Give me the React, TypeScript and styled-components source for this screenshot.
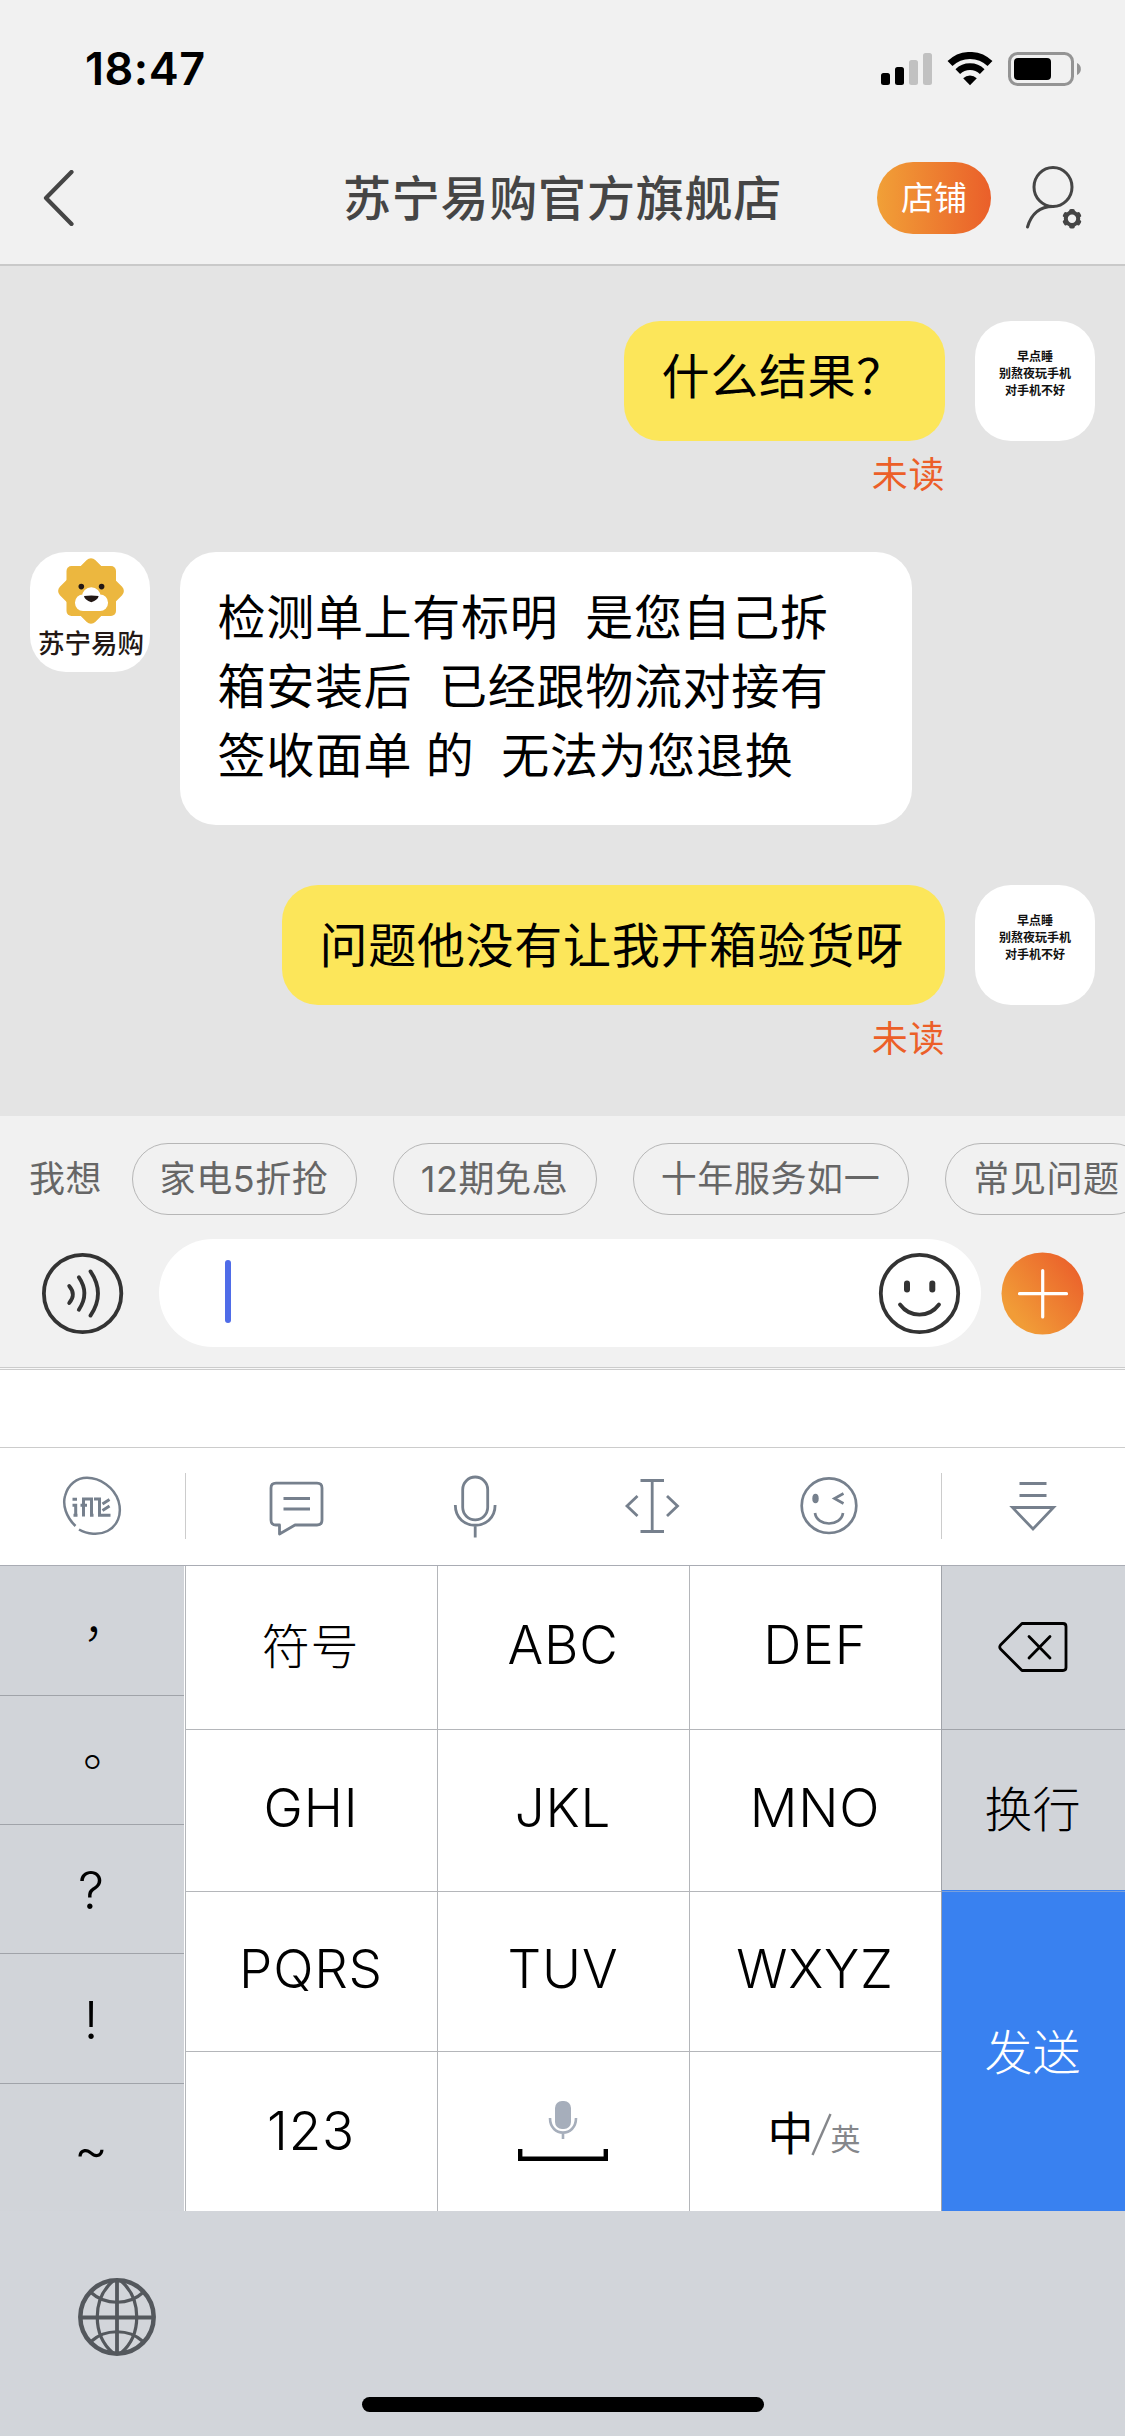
import React from "react";
import styled, { createGlobalStyle, css } from "styled-components";

const cjk = `"Noto Sans CJK SC", "Noto Sans", sans-serif`;
const mixed = `Inter, "Noto Sans CJK SC", sans-serif`;

const GlobalStyle = createGlobalStyle`
  *, *::before, *::after { box-sizing: border-box; }
  body { margin: 0; background: #f1f1f1; }
  svg { display: block; flex: none; }
`;

const Screen = styled.div`
  width: 1125px;
  height: 2436px;
  display: flex;
  flex-direction: column;
  overflow: hidden;
  background: #f1f1f1;
  font-family: ${cjk};
  color: #000;
`;

/* ---------- status bar ---------- */
const StatusBar = styled.div`
  height: 132px;
  flex: none;
  display: flex;
  justify-content: space-between;
  padding: 42px 44px 0 85px;
`;
const Clock = styled.div`
  font: 600 45px/54px Inter, sans-serif;
  letter-spacing: 0.5px;
`;
const StatusIcons = styled.div`
  display: flex;
  gap: 15px;
  padding-top: 10px;
`;

/* ---------- header ---------- */
const Header = styled.header`
  height: 134px;
  flex: none;
  display: grid;
  grid-template-columns: 1fr auto 1fr;
  align-items: center;
  padding: 0 40px;
  border-bottom: 2px solid #c9c9c9;
`;
const Title = styled.h1`
  margin: 0;
  font: 500 48px/60px ${cjk};
  letter-spacing: 0.8px;
  color: #454545;
  padding-bottom: 6px;
`;
const HeaderActions = styled.div`
  display: flex;
  justify-content: flex-end;
  align-items: center;
  gap: 33px;
`;
const ShopButton = styled.div`
  width: 114px;
  height: 72px;
  border-radius: 36px;
  display: flex;
  align-items: center;
  justify-content: center;
  padding-bottom: 4px;
  background: linear-gradient(90deg, #f1a037, #ea5f2a);
  color: #fff;
  font-size: 33px;
  line-height: 40px;
`;

/* ---------- chat ---------- */
const Chat = styled.main`
  height: 850px;
  flex: none;
  background: #e4e4e4;
  padding: 55px 30px 0;
  display: flex;
  flex-direction: column;
`;
const Message = styled.div<{ $mine?: boolean; $gap: number }>`
  display: flex;
  flex-direction: ${(p) => (p.$mine ? "row-reverse" : "row")};
  align-items: flex-start;
  gap: 30px;
  margin-bottom: ${(p) => p.$gap}px;
`;
const Avatar = styled.div`
  width: 120px;
  height: 120px;
  flex: none;
  border-radius: 36px;
  background: #fff;
  overflow: hidden;
  display: flex;
  flex-direction: column;
  align-items: center;
`;
const AvatarNote = styled.div`
  padding-top: 26px;
  font-weight: 700;
  font-size: 12px;
  line-height: 17px;
  text-align: center;
  color: #111;
`;
const BrandName = styled.div`
  font: 500 26.5px/28px ${cjk};
  color: #231815;
  padding-left: 2px;
  white-space: nowrap;
`;
const BubbleColumn = styled.div`
  display: flex;
  flex-direction: column;
  align-items: flex-end;
`;
const Bubble = styled.div<{ $mine?: boolean; $width: number; $top: number }>`
  width: ${(p) => p.$width}px;
  padding: ${(p) => p.$top}px 0 0 37.5px;
  height: ${(p) => (p.$mine ? 120 : 273)}px;
  border-radius: 36px;
  background: ${(p) => (p.$mine ? "#fce65a" : "#fff")};
  font: 400 48px/69px ${mixed};
  letter-spacing: 0.7px;
  word-spacing: -0.8px;
  white-space: pre;
`;
const Unread = styled.div`
  margin-top: 9px;
  font-size: 36px;
  line-height: 44px;
  letter-spacing: 0.6px;
  color: #ec5f28;
`;

/* ---------- composer ---------- */
const Composer = styled.section`
  height: 254px;
  flex: none;
  border-bottom: 1px solid #ccc;
  position: relative;
  &::after {
    content: "";
    position: absolute;
    left: 0;
    right: 0;
    bottom: 0;
    height: 2px;
    border-top: 1px solid #ccc;
    background: #f8f8f8;
  }
`;
const Suggestions = styled.div`
  display: flex;
  align-items: center;
  gap: 36px;
  padding: 27px 0 0 29px;
  color: #666;
  font: 400 36px/44px ${mixed};
  letter-spacing: 0.6px;
  white-space: nowrap;
  overflow: hidden;
`;
const SuggestLabel = styled.span`
  width: 67px;
`;
const Chip = styled.span<{ $width: number }>`
  width: ${(p) => p.$width}px;
  height: 72px;
  flex: none;
  display: flex;
  justify-content: center;
  align-items: center;
  padding: 0 1px 0 0;
  border: 1.5px solid #b6b6b6;
  border-radius: 36px;
`;
const InputRow = styled.div`
  display: flex;
  align-items: center;
  padding: 24px 0 0 41px;
`;
const InputField = styled.div`
  width: 822px;
  height: 108px;
  margin: 0 20px 0 35px;
  border-radius: 54px;
  background: #fff;
  display: flex;
  align-items: center;
  justify-content: space-between;
  padding: 0 20px 0 66px;
`;
const Caret = styled.div`
  width: 6px;
  height: 63px;
  margin-bottom: 3px;
  border-radius: 3px;
  background: #4f6ce8;
`;

/* ---------- keyboard ---------- */
const Candidates = styled.div`
  height: 78px;
  flex: none;
  background: #fff;
  border-bottom: 1px solid #ccc;
`;
const Toolbar = styled.div`
  height: 118px;
  flex: none;
  display: grid;
  grid-template-columns: 186px 1fr 184px;
  align-items: center;
  background: #fff;
  border-bottom: 1px solid #a9acb4;
  padding-bottom: 2px;
`;
const ToolSide = styled.div<{ $side: "left" | "right" }>`
  height: 66px;
  display: flex;
  align-items: center;
  justify-content: center;
  padding-right: 2px;
  ${(p) => (p.$side === "left" ? "border-right" : "border-left")}: 1px solid #ccc;
`;
const ToolMain = styled.div`
  display: flex;
  align-items: center;
  justify-content: space-between;
  padding: 0 82px 0 82px;
`;
const Keys = styled.div`
  height: 645px;
  flex: none;
  display: grid;
  grid-template-columns: 184px 758px 183px;
`;
const SideColumn = styled.div`
  display: grid;
  grid-template-rows: 130px 129px 129px 130px 127px;
  background: #d1d4d9;
`;
const PunctKey = styled.div<{ $full?: boolean }>`
  display: flex;
  align-items: center;
  justify-content: center;
  padding: ${(p) => (p.$full ? "0 0 22px 30px" : "4px 2px 0 0")};
  border-bottom: 1px solid #a0a3a9;
  font: 300 ${(p) => (p.$full ? 48 : 52)}px/60px ${mixed};
  &:last-child { border-bottom: 0; }
`;
const KeyGrid = styled.div`
  display: grid;
  grid-template-columns: 252px 252px 252px;
  grid-template-rows: 164px 162px 160px 159px;
  background: #fff;
  border-right: 1px solid #a0a3a9;
  padding-left: 1px;
`;
const Key = styled.div<{ $cjk?: boolean }>`
  display: flex;
  align-items: center;
  justify-content: center;
  padding: 0 1px 5px 0;
  border-left: 1px solid #b4b6ba;
  border-bottom: 1px solid #b4b6ba;
  letter-spacing: 0.8px;
  ${(p) =>
    p.$cjk
      ? css`font: 300 48px/60px ${cjk}; padding: 0 2px 9px 0;`
      : css`font: 300 53px/60px Inter, sans-serif;`}
  &:nth-child(n + 10) { border-bottom: 0; padding-bottom: 1px; }
`;
const SpaceKey = styled(Key)`
  flex-direction: column;
  gap: 10px;
  padding-right: 2px;
`;
const LangKey = styled(Key)`
  align-items: baseline;
  letter-spacing: 0;
  padding: 48px 3px 0 0;
  font: 400 46px/60px ${cjk};
`;
const LangAlt = styled.span`
  font-size: 30px;
  color: #85878b;
`;
const SlashIcon = styled.svg`
  align-self: flex-start;
  margin: 13px -1px 0 -3px;
`;
const ActionColumn = styled.div`
  display: grid;
  grid-template-rows: 164px 160px 1fr;
  background: #d1d4d9;
`;
const ActionKey = styled.div<{ $send?: boolean }>`
  display: flex;
  align-items: center;
  justify-content: center;
  font: 300 48px/60px ${cjk};
  padding: 0 2px 8px 0;
  border-bottom: 1px solid #a0a3a9;
  ${(p) =>
    p.$send &&
    css`
      background: linear-gradient(#3981f0 1px, #79a0dc 1px, #79a0dc 2px, #3981f0 2px);
      color: #fff;
      border: 0;
      padding-bottom: 4px;
    `}
  &:first-child { padding-bottom: 1px; }
  &:nth-child(2) { border: 0; }
`;
const Dock = styled.footer`
  flex: 1;
  background: #d2d5da;
  display: flex;
  flex-direction: column;
  align-items: center;
  justify-content: space-between;
  padding: 66px 0 24px;
`;
const DockRow = styled.div`
  width: 100%;
  padding-left: 77px;
`;
const HomeIndicator = styled.div`
  width: 402px;
  height: 15px;
  border-radius: 8px;
  background: #000;
`;

/* ---------- icons ---------- */
const tint = "#76808d";

const Signal = () => (
  <svg width="51" height="34" viewBox="0 0 51 34">
    <rect x="0" y="21" width="9" height="12" rx="2.5" />
    <rect x="14" y="15" width="9" height="18" rx="2.5" />
    <rect x="28" y="8" width="9" height="25" rx="2.5" fill="#c1c1c1" />
    <rect x="42" y="1" width="9" height="32" rx="2.5" fill="#c1c1c1" />
  </svg>
);
const Wifi = () => (
  <svg width="46" height="34" viewBox="0 0 46 34">
    <path d="M3 11.6 A28.6 28.6 0 0 1 43 11.6" fill="none" stroke="#000" strokeWidth="7" />
    <path d="M10.8 19.7 A17.3 17.3 0 0 1 35.2 19.7" fill="none" stroke="#000" strokeWidth="6.6" />
    <path d="M23 33.2 L16.2 26.2 A9.8 9.8 0 0 1 29.8 26.2 Z" />
  </svg>
);
const Battery = () => (
  <svg width="73" height="34" viewBox="0 0 73 34">
    <rect x="1.5" y="1.5" width="63" height="31" rx="8" fill="none" stroke="#949494" strokeWidth="3" />
    <rect x="6" y="6" width="37" height="22" rx="4" />
    <path d="M69 11 A6.6 6.6 0 0 1 69 23 Z" fill="#949494" />
  </svg>
);
const Back = () => (
  <svg width="36" height="56" viewBox="0 0 36 56">
    <path d="M31.5 2 L6 28 L31.5 54" fill="none" stroke="#454545" strokeWidth="4.2" strokeLinecap="round" strokeLinejoin="round" />
  </svg>
);
const gearTeeth = [0, 60, 120, 180, 240, 300];
const UserSettings = () => (
  <svg width="61" height="66" viewBox="0 0 61 66">
    <g fill="none" stroke="#454545" strokeWidth="3" strokeLinecap="round">
      <ellipse cx="29" cy="22" rx="19" ry="19.5" />
      <path d="M3.5 62 C7 50 15 41.5 29 41.5" />
    </g>
    <circle cx="48" cy="53.7" r="6.2" fill="none" stroke="#454545" strokeWidth="4" />
    {gearTeeth.map((a) => (
      <rect key={a} x="45.2" y="44" width="5.6" height="4" rx="1.6" fill="#454545" transform={`rotate(${a} 48 53.7)`} />
    ))}
  </svg>
);
const Lion = () => (
  <svg width="120" height="76" viewBox="0 0 120 76">
    <g fill="#ecb73f">
      <rect x="36.5" y="14" width="49.5" height="50" rx="5" />
      <rect x="36" y="14" width="50" height="50" rx="6" transform="rotate(45 61 39)" />
    </g>
    <circle cx="51.3" cy="34.6" r="2.8" fill="#231815" />
    <circle cx="71.6" cy="34.6" r="2.8" fill="#231815" />
    <rect x="45" y="42.5" width="33" height="16.5" rx="8" fill="#fff" />
    <circle cx="61.3" cy="44.5" r="9.3" fill="#fff" />
    <path d="M54 44 Q61.3 43 68.6 44 Q68 48 61.3 50.2 Q54.6 48 54 44Z" fill="#231815" />
  </svg>
);
const Voice = () => (
  <svg width="83" height="83" viewBox="0 0 83 83">
    <g fill="none" stroke="#333" strokeWidth="3.8" strokeLinecap="round">
      <circle cx="41.6" cy="41.5" r="38.7" />
      <path d="M28.2 34 Q35.5 42.5 28.2 51" />
      <path d="M37.8 25.2 Q49 41.5 37.8 57.8" />
      <path d="M49.5 19.4 Q64.5 41.5 49.5 63.6" />
    </g>
  </svg>
);
const Smile = () => (
  <svg width="83" height="83" viewBox="0 0 83 83">
    <g fill="none" stroke="#333" strokeWidth="3.8" strokeLinecap="round">
      <circle cx="41.5" cy="41.5" r="38.7" />
      <path d="M22 52.5 C32 66 51 66 61 52.5" />
    </g>
    <rect x="26" y="28.5" width="6" height="12" rx="3" fill="#333" />
    <rect x="51.3" y="28.5" width="6" height="12" rx="3" fill="#333" />
  </svg>
);
const Plus = () => (
  <svg width="83" height="83" viewBox="0 0 83 83">
    <defs>
      <linearGradient id="plusFill" x1="0.1" y1="0.85" x2="0.9" y2="0.2">
        <stop offset="0.1" stopColor="#f19c37" />
        <stop offset="1" stopColor="#eb642c" />
      </linearGradient>
    </defs>
    <circle cx="41.5" cy="41.5" r="41" fill="url(#plusFill)" />
    <path d="M18.5 41.7 H65.5 M41.7 18.5 V65" stroke="#fff" strokeWidth="3.2" strokeLinecap="round" />
  </svg>
);
const InputMethodLogo = () => (
  <svg width="60" height="60" viewBox="0 0 60 60">
    <g fill="none" stroke={tint} strokeWidth="2.5">
      <path d="M13.5 50 C4 41 0.5 29 3 20 C6 8 15 1.8 25 1.8 C38 1.8 52 11 56.5 25 C60.5 39 55 50 45.5 55 C37 59.5 25 58.3 17 53.5" />
    </g>
    <g fill="none" stroke={tint} strokeWidth="3">
      <path d="M10.5 23.2 H15 M10.5 29.3 H13.7 V39 M11.5 39.2 H15.5" />
      <path d="M21.5 40.5 V23 H29.5 V39.2 H31.5 M18.5 29.2 H25" />
      <path d="M32 23 H37.5 V39.2 H48.5" />
      <path d="M40.5 28 L47.5 23.5 M40.5 34.5 L47.5 30" />
    </g>
  </svg>
);
const Phrases = () => (
  <svg width="60" height="64" viewBox="0 0 60 64">
    <g fill="none" stroke={tint} strokeWidth="2.8" strokeLinejoin="round">
      <path d="M8 9.2 H49 Q54 9.2 54 14 V46 Q54 51 49 51 H27 L11.5 60 V51 H8 Q3 51 3 46 V14 Q3 9.2 8 9.2 Z" />
      <path d="M15.5 24.5 H42 M15.5 35 H42" />
    </g>
  </svg>
);
const Mic = () => (
  <svg width="60" height="64" viewBox="0 0 60 64">
    <g fill="none" stroke={tint} strokeWidth="2.8">
      <rect x="17.7" y="3" width="25" height="42.8" rx="12.5" />
      <path d="M10.3 31 C10.3 58 50.1 58 50.1 31 M30.2 51.5 V63.5" />
    </g>
  </svg>
);
const MoveCursor = () => (
  <svg width="60" height="64" viewBox="0 0 60 64">
    <path d="M18.5 6.5 H42 M18.5 57.5 H42 M30.2 6.5 V57.5 M15.5 22 L5 32 L15.5 42 M45 22 L55.5 32 L45 42" fill="none" stroke={tint} strokeWidth="2.8" />
  </svg>
);
const Wink = () => (
  <svg width="60" height="64" viewBox="0 0 60 64">
    <g fill="none" stroke={tint} strokeWidth="2.7">
      <circle cx="30" cy="31.7" r="27.3" />
      <path d="M16 39 C18 53 42 53 44 39 M44.5 19.5 L35.5 24.5 L44.5 29.5" />
    </g>
    <ellipse cx="16.5" cy="24.5" rx="3.2" ry="4.8" fill={tint} />
  </svg>
);
const Collapse = () => (
  <svg width="60" height="64" viewBox="0 0 60 64">
    <path d="M16.5 9.5 H43.5 M16.5 21.5 H43.5 M9.5 33.5 H50.5 L30 55 Z" fill="none" stroke={tint} strokeWidth="2.8" />
  </svg>
);
const Backspace = () => (
  <svg width="72" height="52" viewBox="0 0 72 52">
    <g fill="none" stroke="#000" strokeWidth="2.8" strokeLinecap="round" strokeLinejoin="round">
      <path d="M25 2.5 H66 Q69 2.5 69 5.5 V46.5 Q69 49.5 66 49.5 H25 L3.5 28 Q2 26 3.5 24 Z" />
      <path d="M32 15.5 L53 37 M53 15.5 L32 37" />
    </g>
  </svg>
);
const MicSmall = () => (
  <svg width="30" height="38" viewBox="0 0 30 38">
    <rect x="7" y="0" width="16" height="28" rx="7" fill="#a6aebb" />
    <path d="M2 17 C2 36.5 28 36.5 28 17 M15 31 V38" fill="none" stroke="#a6aebb" strokeWidth="2.6" />
  </svg>
);
const SpaceBar = () => (
  <svg width="90" height="12" viewBox="0 0 90 12">
    <path d="M2.2 0 V9.8 H87.8 V0" fill="none" stroke="#000" strokeWidth="4.4" />
  </svg>
);
const Globe = () => (
  <svg width="80" height="80" viewBox="0 0 80 80">
    <g fill="none" stroke="#54585d" strokeWidth="3.2">
      <circle cx="40" cy="40" r="36.7" strokeWidth="4.5" />
      <path d="M40 3 V77 M3 40.5 H77" strokeWidth="3.8" />
      <path d="M36 4 C15 22 15 58 36 76 M44 4 C65 22 65 58 44 76" />
      <path d="M14 15.5 C28 28.5 52 28.5 66 15.5 M14 64.5 C28 51.5 52 51.5 66 64.5" />
    </g>
  </svg>
);

const noteAvatar = (
  <Avatar>
    <AvatarNote>
      早点睡
      <br />
      别熬夜玩手机
      <br />
      对手机不好
    </AvatarNote>
  </Avatar>
);

const chips: { text: string; width: number }[] = [
  { text: "家电5折抢", width: 225 },
  { text: "12期免息", width: 204 },
  { text: "十年服务如一", width: 276 },
  { text: "常见问题", width: 204 },
];

export default function App() {
  return (
    <Screen>
      <GlobalStyle />
      <StatusBar>
        <Clock>18:47</Clock>
        <StatusIcons>
          <Signal />
          <Wifi />
          <Battery />
        </StatusIcons>
      </StatusBar>
      <Header>
        <Back />
        <Title>苏宁易购官方旗舰店</Title>
        <HeaderActions>
          <ShopButton>店铺</ShopButton>
          <UserSettings />
        </HeaderActions>
      </Header>

      <Chat>
        <Message $mine $gap={58}>
          {noteAvatar}
          <BubbleColumn>
            <Bubble $mine $width={321} $top={21}>什么结果？</Bubble>
            <Unread>未读</Unread>
          </BubbleColumn>
        </Message>
        <Message $gap={60}>
          <Avatar>
            <Lion />
            <BrandName>苏宁易购</BrandName>
          </Avatar>
          <Bubble $width={732} $top={30.5}>
            {"检测单上有标明  是您自己拆\n箱安装后  已经跟物流对接有\n签收面单 的  无法为您退换"}
          </Bubble>
        </Message>
        <Message $mine $gap={0}>
          {noteAvatar}
          <BubbleColumn>
            <Bubble $mine $width={663} $top={26}>问题他没有让我开箱验货呀</Bubble>
            <Unread>未读</Unread>
          </BubbleColumn>
        </Message>
      </Chat>

      <Composer>
        <Suggestions>
          <SuggestLabel>我想</SuggestLabel>
          {chips.map((c) => (
            <Chip key={c.text} $width={c.width}>{c.text}</Chip>
          ))}
        </Suggestions>
        <InputRow>
          <Voice />
          <InputField>
            <Caret />
            <Smile />
          </InputField>
          <Plus />
        </InputRow>
      </Composer>

      <Candidates />
      <Toolbar>
        <ToolSide $side="left"><InputMethodLogo /></ToolSide>
        <ToolMain>
          <Phrases />
          <Mic />
          <MoveCursor />
          <Wink />
        </ToolMain>
        <ToolSide $side="right"><Collapse /></ToolSide>
      </Toolbar>

      <Keys>
        <SideColumn>
          <PunctKey $full>，</PunctKey>
          <PunctKey $full>。</PunctKey>
          <PunctKey>?</PunctKey>
          <PunctKey>!</PunctKey>
          <PunctKey>~</PunctKey>
        </SideColumn>
        <KeyGrid>
          <Key $cjk>符号</Key>
          <Key>ABC</Key>
          <Key>DEF</Key>
          <Key>GHI</Key>
          <Key>JKL</Key>
          <Key>MNO</Key>
          <Key>PQRS</Key>
          <Key>TUV</Key>
          <Key>WXYZ</Key>
          <Key>123</Key>
          <SpaceKey>
            <MicSmall />
            <SpaceBar />
          </SpaceKey>
          <LangKey>
            中
            <SlashIcon width="21" height="43" viewBox="0 0 21 43">
              <path d="M1.5 42 L19.5 1" stroke="#85878b" strokeWidth="2.4" />
            </SlashIcon>
            <LangAlt>英</LangAlt>
          </LangKey>
        </KeyGrid>
        <ActionColumn>
          <ActionKey><Backspace /></ActionKey>
          <ActionKey>换行</ActionKey>
          <ActionKey $send>发送</ActionKey>
        </ActionColumn>
      </Keys>

      <Dock>
        <DockRow><Globe /></DockRow>
        <HomeIndicator />
      </Dock>
    </Screen>
  );
}
